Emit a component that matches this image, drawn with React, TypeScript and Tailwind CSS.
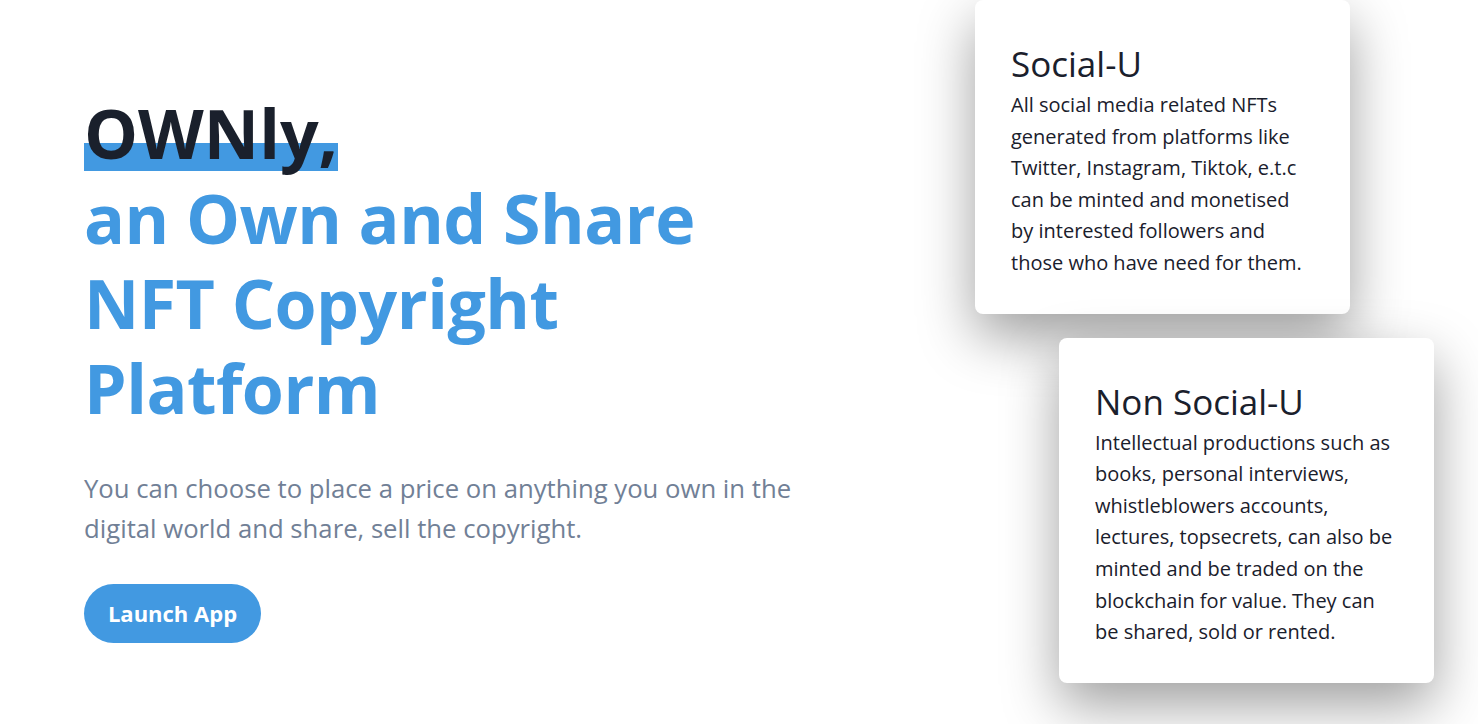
import React from 'react';

const font = { fontFamily: '"Segoe UI", "Open Sans", "Noto Sans", sans-serif' };

const cards = [
  {
    title: 'Social-U',
    body: 'All social media related NFTs generated from platforms like Twitter, Instagram, Tiktok, e.t.c can be minted and monetised by interested followers and those who have need for them.',
  },
  {
    title: 'Non Social-U',
    body: 'Intellectual productions such as books, personal interviews, whistleblowers accounts, lectures, topsecrets, can also be minted and be traded on the blockchain for value. They can be shared, sold or rented.',
  },
];

const Card: React.FC<{ title: string; body: string; className?: string }> = ({ title, body, className }) => (
  <div className={`w-[375px] rounded-lg bg-white px-9 pt-[44px] pb-[35px] text-[#1a202c] shadow-[0_22px_55px_rgba(0,0,0,0.38)] ${className ?? ''}`}>
    <h3 className="text-[35px] leading-10">{title}</h3>
    <p className="mt-[5px] max-w-[300px] text-[20px] leading-[31.6px]">{body}</p>
  </div>
);

export default function App() {
  return (
    <div className="flex min-h-screen w-full justify-between overflow-hidden bg-white" style={font}>
      <div className="pl-[84px] pt-[90px]">
        <h1 className="text-[68px] font-bold leading-[85px] tracking-[-0.5px]">
          <span className="relative inline-block text-[#1a202c] tracking-normal">
            <span className="absolute left-0 right-0 bottom-[4px] h-[28px] bg-[#4299e1]"></span>
            <span className="relative">OWNly,</span>
          </span>
          <span className="block text-[#4299e1]">an Own and Share</span>
          <span className="block text-[#4299e1]">NFT Copyright</span>
          <span className="block text-[#4299e1]">Platform</span>
        </h1>
        <p className="mt-[39px] w-[760px] text-[25.7px] leading-10 text-[#718096]">
          You can choose to place a price on anything you own in the digital world and share, sell the copyright.
        </p>
        <button className="mt-[35px] h-[59px] w-[177px] rounded-full bg-[#4299e1] text-[22px] font-bold text-white">
          Launch App
        </button>
      </div>
      <div className="flex flex-col pr-[44px]">
        <Card {...cards[0]} />
        <Card {...cards[1]} className="mt-6 ml-[84px]" />
      </div>
    </div>
  );
}
